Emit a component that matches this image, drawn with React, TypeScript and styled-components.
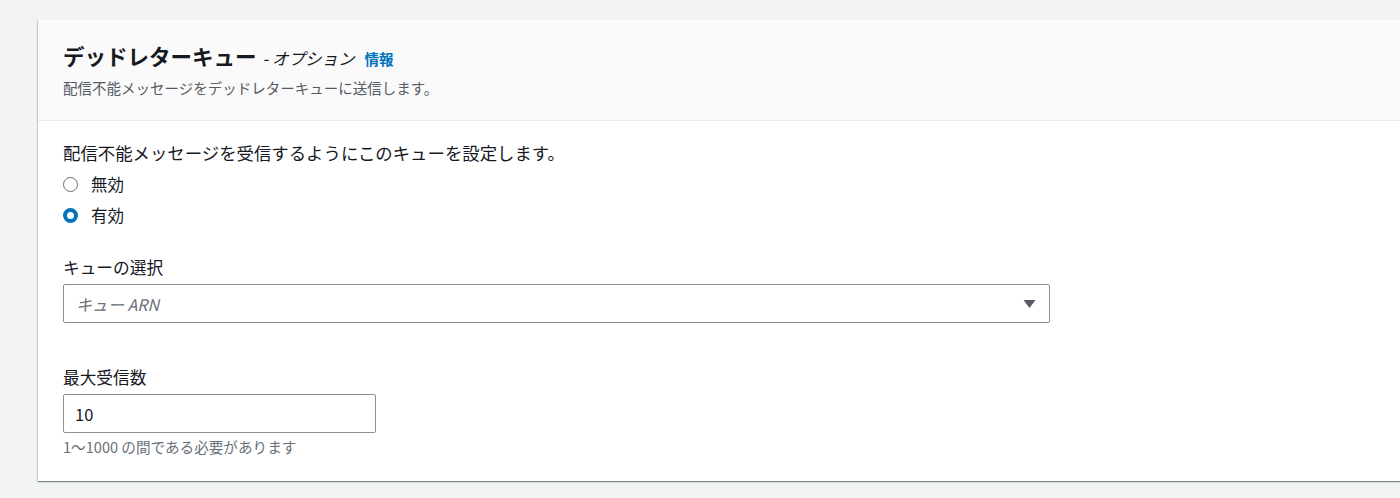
import React from "react";
import styled, { createGlobalStyle } from "styled-components";

const GlobalStyle = createGlobalStyle`
  html, body {
    margin: 0;
    padding: 0;
    background: #f2f3f3;
    overflow: hidden;
  }
  body {
    font-family: "Noto Sans CJK JP", "Noto Sans", "Liberation Sans", sans-serif;
    color: #16191f;
  }
`;

const Page = styled.div`
  padding: 20px 0 0 38px;
  height: 478px;
`;

const Card = styled.section`
  width: 1400px;
  background: #ffffff;
  box-shadow: 0 1px 1px 0 rgba(0, 28, 36, 0.3), 1px 1px 1px 0 rgba(0, 28, 36, 0.15),
    -1px 1px 1px 0 rgba(0, 28, 36, 0.15);
`;

const Header = styled.header`
  background: #fafafa;
  border-bottom: 1px solid #eaeded;
  padding: 24px 25px 22px;
`;

const TitleRow = styled.div`
  display: flex;
  align-items: baseline;
  gap: 6px;
  line-height: 24px;
`;

const Title = styled.h2`
  margin: 0;
  font-size: 21.5px;
  font-weight: 700;
  color: #16191f;
`;

const Optional = styled.span`
  font-size: 16.5px;
  font-style: italic;
  color: #16191f;
`;

const InfoLink = styled.a`
  margin-left: 4px;
  font-size: 14.5px;
  font-weight: 700;
  color: #0073bb;
  text-decoration: none;
`;

const Description = styled.p`
  margin: 7px 0 0;
  font-size: 14.5px;
  line-height: 20px;
  color: #545b64;
`;

const Body = styled.div`
  padding: 21px 25px 24px;
`;

const Text = styled.p`
  margin: 0;
  font-size: 17.4px;
  line-height: 22px;
`;

const RadioGroup = styled.div`
  display: flex;
  flex-direction: column;
  gap: 9px;
  margin-top: 9px;
`;

const RadioRow = styled.label`
  display: flex;
  align-items: center;
  gap: 13px;
  font-size: 16.5px;
  line-height: 22px;
`;

const RadioDot = styled.span<{ $checked?: boolean }>`
  box-sizing: border-box;
  width: 15px;
  height: 15px;
  border-radius: 50%;
  border: ${(p) => (p.$checked ? "4.5px solid #0073bb" : "1.5px solid #687078")};
  background: #fff;
`;

const Field = styled.div<{ $gap?: number }>`
  margin-top: ${(p) => p.$gap ?? 0}px;
`;

const Label = styled.div`
  font-size: 16.7px;
  line-height: 22px;
  margin-bottom: 6px;
`;

const Select = styled.div`
  box-sizing: border-box;
  width: 987px;
  height: 39px;
  border: 1px solid #879596;
  border-radius: 2px;
  display: flex;
  align-items: center;
  justify-content: space-between;
  padding: 0 13px 0 12px;
`;

const Placeholder = styled.span`
  font-size: 16px;
  font-style: italic;
  color: #687078;
`;

const Input = styled.div`
  box-sizing: border-box;
  width: 313px;
  height: 39px;
  border: 1px solid #879596;
  border-radius: 2px;
  display: flex;
  align-items: center;
  padding: 0 11px;
  font-size: 16.5px;
`;

const Hint = styled.div`
  margin-top: 4px;
  font-size: 14.6px;
  line-height: 20px;
  color: #687078;
`;

const Caret = () => (
  <svg width="13" height="10" viewBox="0 0 13 10">
    <path d="M0.5 1 H12.5 L6.5 9 Z" fill="#545b64" />
  </svg>
);

export default function App() {
  return (
    <>
      <GlobalStyle />
      <Page>
        <Card>
          <Header>
            <TitleRow>
              <Title>デッドレターキュー</Title>
              <Optional>- オプション</Optional>
              <InfoLink href="#">情報</InfoLink>
            </TitleRow>
            <Description>配信不能メッセージをデッドレターキューに送信します。</Description>
          </Header>
          <Body>
            <Text>配信不能メッセージを受信するようにこのキューを設定します。</Text>
            <RadioGroup>
              <RadioRow>
                <RadioDot />
                無効
              </RadioRow>
              <RadioRow>
                <RadioDot $checked />
                有効
              </RadioRow>
            </RadioGroup>
            <Field $gap={30}>
              <Label>キューの選択</Label>
              <Select>
                <Placeholder>キュー ARN</Placeholder>
                <Caret />
              </Select>
            </Field>
            <Field $gap={43}>
              <Label>最大受信数</Label>
              <Input>10</Input>
              <Hint>1〜1000 の間である必要があります</Hint>
            </Field>
          </Body>
        </Card>
      </Page>
    </>
  );
}
